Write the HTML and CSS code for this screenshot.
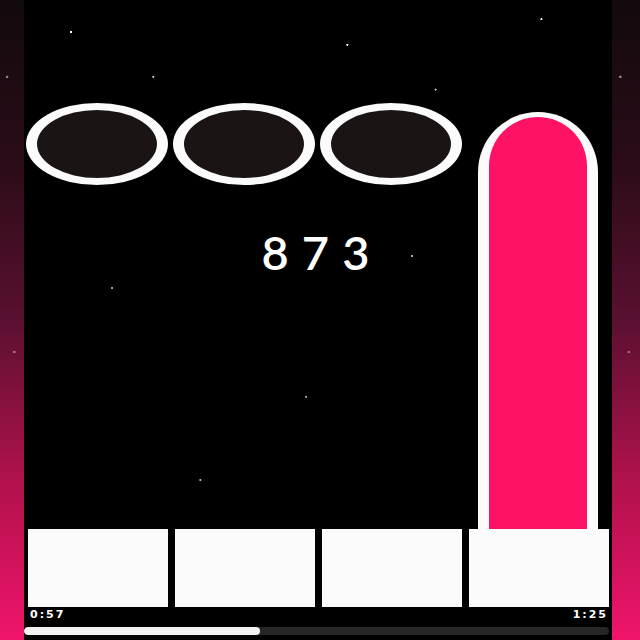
FILE: index.html
```html
<!DOCTYPE html>
<html>
<head>
<meta charset="utf-8">
<link rel="stylesheet" href="styles.css">
</head>
<body>
<div class="frame">
  <div class="side side-left"></div>
  <main class="screen">
    <section class="stage">
      <div class="left-col">
        <div class="ovals">
          <div class="oval"></div>
          <div class="oval"></div>
          <div class="oval"></div>
        </div>
        <div class="score">873</div>
      </div>
      <div class="pill"><div class="pill-fill"></div></div>
    </section>
    <section class="tiles">
      <div class="tile"></div>
      <div class="tile"></div>
      <div class="tile"></div>
      <div class="tile"></div>
    </section>
    <div class="times"><span>0:57</span><span>1:25</span></div>
    <div class="progress"><div class="progress-fill" style="width:236px"></div></div>
  </main>
  <div class="side side-right"></div>
</div>
</body>
</html>
```
FILE: styles.css
```css
html, body { margin: 0; padding: 0; background: #000; }
.frame { display: flex; width: 640px; height: 640px; overflow: hidden; }
.side {
  background:
    radial-gradient(circle at 30% 12%, rgba(255,255,255,.5) 0 1px, transparent 1.5px),
    radial-gradient(circle at 60% 55%, rgba(255,255,255,.4) 0 1px, transparent 1.5px),
    linear-gradient(#120a0d 0%, #2a0c18 25%, #5a1030 50%, #b0124c 75%, #f0146a 100%);
}
.side-left { width: 24px; }
.side-right { width: 28px; }
.screen {
  width: 588px;
  background-color: #000;
  background-image:
    radial-gradient(circle at 8% 5%, #fff 0 0.8px, transparent 1.3px),
    radial-gradient(circle at 22% 12%, #ccc 0 0.8px, transparent 1.3px),
    radial-gradient(circle at 38% 18%, #ccc 0 0.8px, transparent 1.3px),
    radial-gradient(circle at 55% 7%, #fff 0 0.8px, transparent 1.3px),
    radial-gradient(circle at 70% 14%, #bbb 0 0.8px, transparent 1.3px),
    radial-gradient(circle at 88% 3%, #fff 0 0.8px, transparent 1.3px),
    radial-gradient(circle at 15% 45%, #aaa 0 0.8px, transparent 1.3px),
    radial-gradient(circle at 48% 62%, #aaa 0 0.8px, transparent 1.3px),
    radial-gradient(circle at 30% 75%, #bbb 0 0.8px, transparent 1.3px),
    radial-gradient(circle at 66% 40%, #aaa 0 0.8px, transparent 1.3px),
    radial-gradient(circle at 5% 88%, #bbb 0 0.8px, transparent 1.3px);
  display: flex;
  flex-direction: column;
  font-family: "Liberation Sans", Arial, sans-serif;
}
.stage {
  display: flex;
  align-items: flex-start;
  height: 529px;
  padding-top: 103px;
  box-sizing: border-box;
  padding-left: 2px;
}
.left-col { width: 436px; display: flex; flex-direction: column; }
.ovals { display: flex; gap: 5px; }
.oval {
  width: 142px;
  height: 82px;
  box-sizing: border-box;
  border-style: solid;
  border-color: #fbfbfb;
  border-width: 7px 11px;
  border-radius: 50%;
  background: #1a1415;
}
.score {
  margin-top: 42px;
  padding-left: 156px;
  text-align: center;
  color: #fff;
  font-family: Lato, "Open Sans", sans-serif;
  font-weight: 600;
  font-size: 47px;
  letter-spacing: 13px;
  line-height: 50px;
}
.pill {
  margin-left: 16px;
  margin-top: 9px;
  width: 120px;
  height: 417px;
  box-sizing: border-box;
  background: #fbfbfb;
  border-radius: 60px 60px 0 0;
  padding: 5px 11px 0 11px;
  display: flex;
}
.pill-fill {
  flex: 1;
  background: #fe1265;
  border-radius: 49px 49px 0 0;
}
.tiles {
  display: grid;
  grid-template-columns: repeat(4, 140px);
  gap: 7px;
  margin-left: 4px;
  height: 78px;
}
.tile { background: #fbfbfb; }
.times {
  display: flex;
  justify-content: space-between;
  padding: 0 2px 0 6px;
  width: 586px;
  box-sizing: border-box;
  height: 14px;
  align-items: center;
  color: #fff;
  font-family: "DejaVu Sans", sans-serif;
  font-weight: bold;
  font-size: 11px;
  letter-spacing: 2px;
}
.progress {
  margin-top: 6px;
  width: 585px;
  height: 8px;
  border-radius: 4px;
  background: #262626;
  overflow: hidden;
}
.progress-fill { height: 100%; background: #f2f2f2; border-radius: 4px; }
```
